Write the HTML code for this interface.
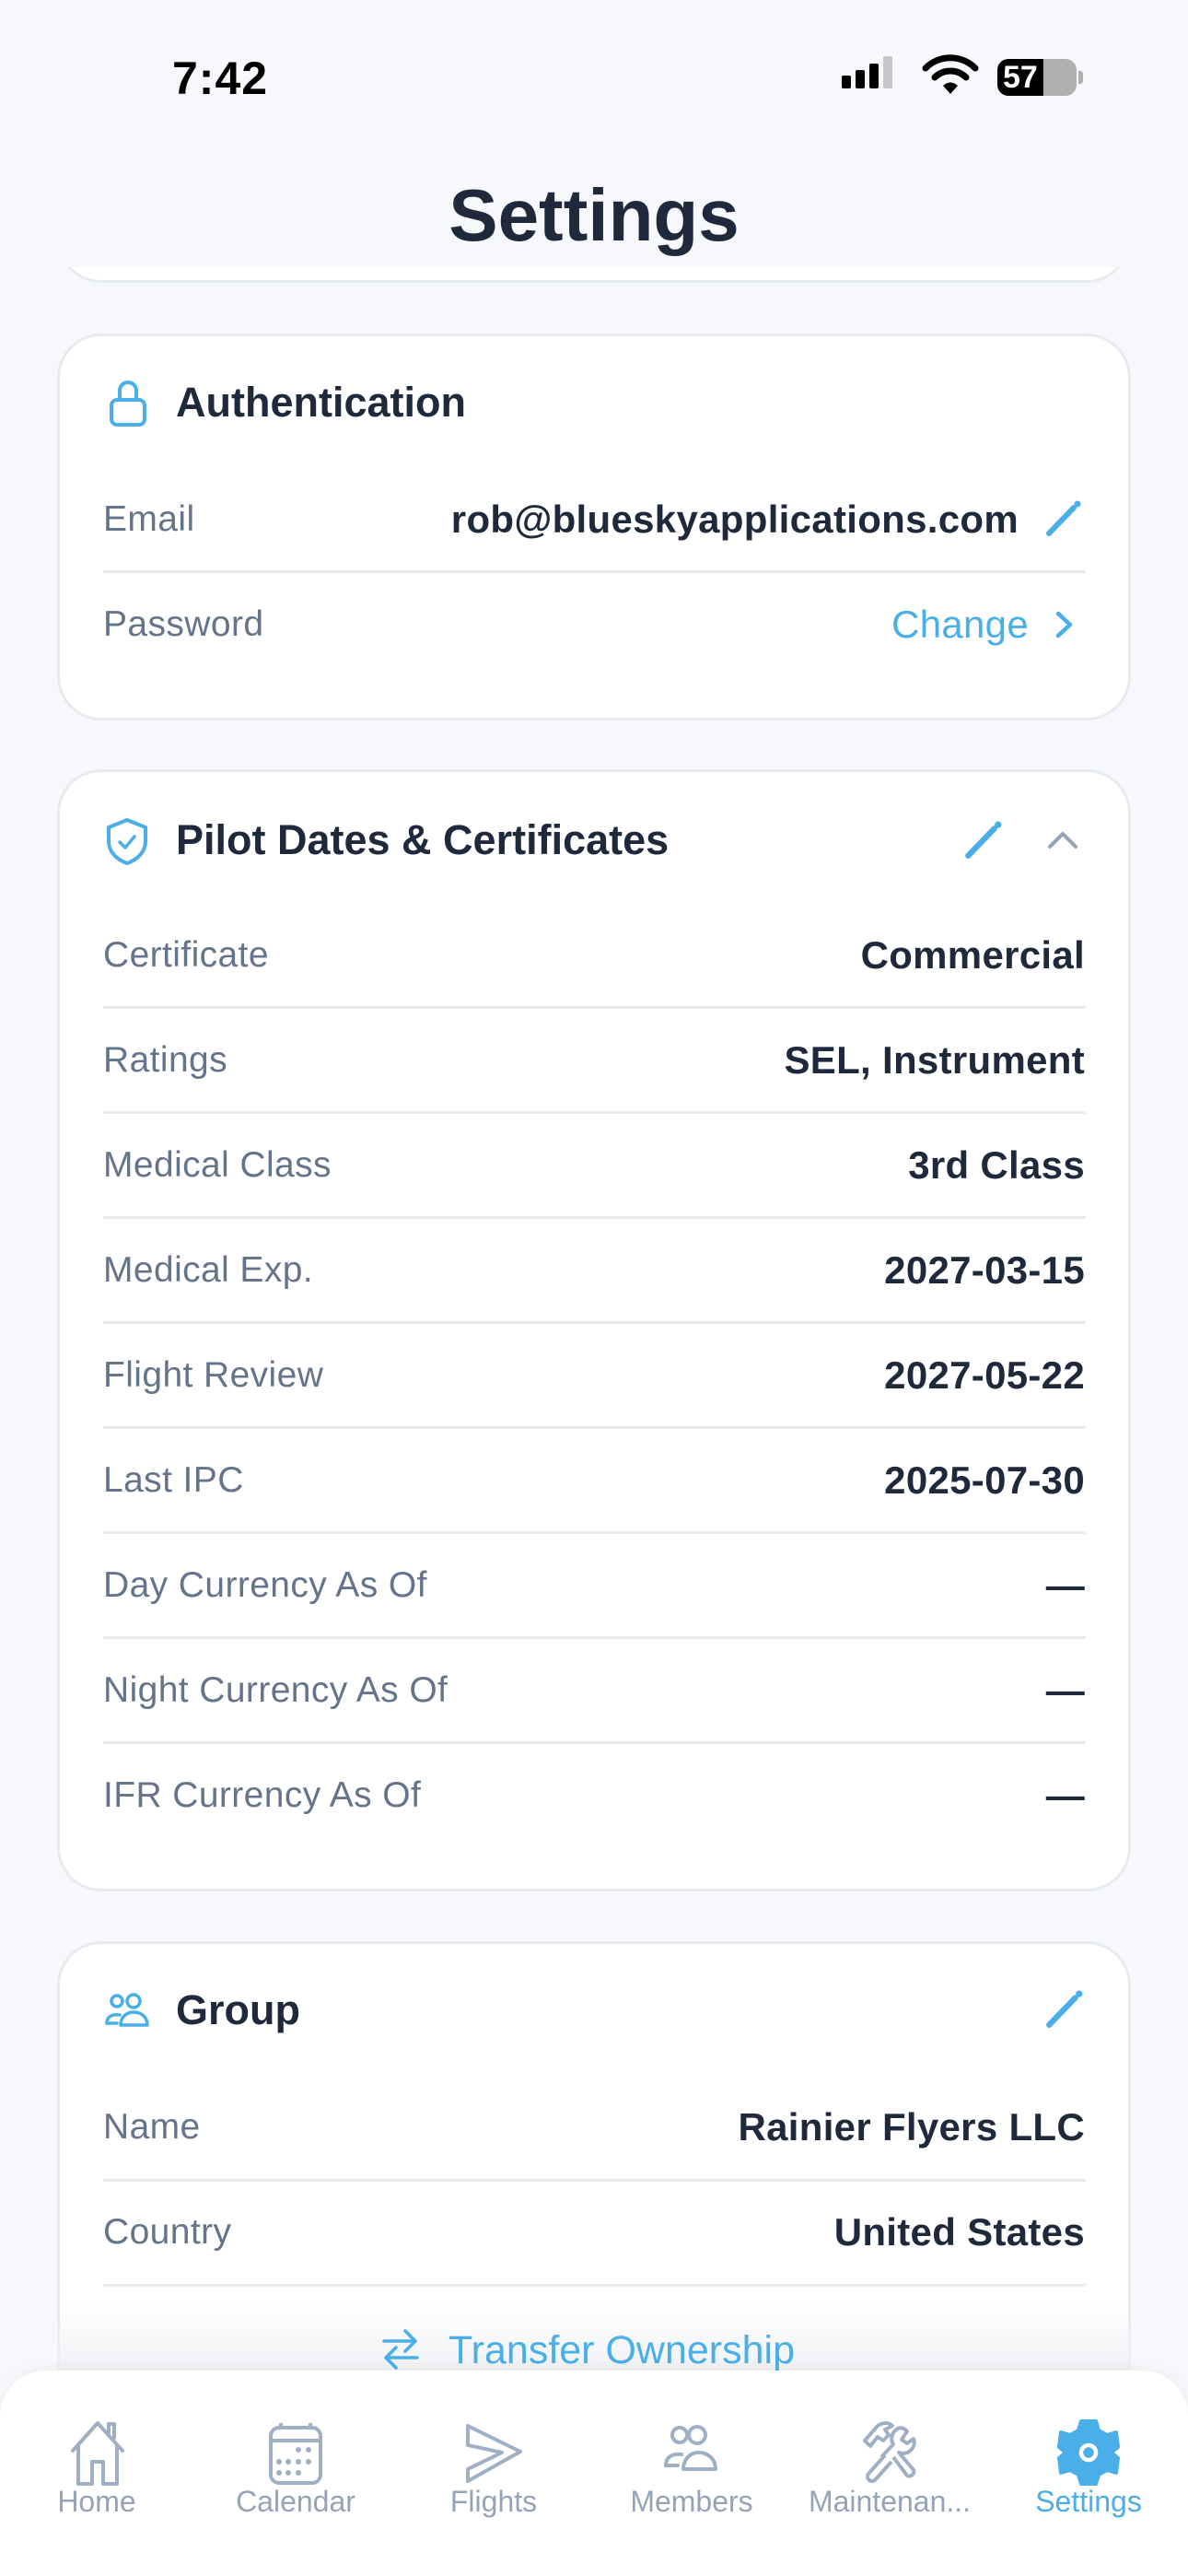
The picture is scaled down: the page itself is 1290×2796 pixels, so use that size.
<!DOCTYPE html>
<html><head><meta charset="utf-8"><style>
*{margin:0;padding:0;box-sizing:border-box}
body{width:1290px;height:2796px;background:#f6f8fb;font-family:"Liberation Sans",sans-serif;position:relative;overflow:hidden}
.a{position:absolute}
.card{position:absolute;left:62px;width:1166px;background:#fff;border:3px solid #e7ebf0;border-radius:48px}
.lbl{position:absolute;left:112px;font-size:39px;letter-spacing:0.4px;color:#64748b;line-height:46px;transform:translateY(-23px)}
.val{position:absolute;right:112px;font-size:42px;letter-spacing:0.3px;font-weight:bold;color:#1e293b;line-height:48px;transform:translateY(-24px)}
.div{position:absolute;left:112px;width:1067px;height:3px;background:#e8ecf1}
.hd{position:absolute;left:191px;font-size:45px;font-weight:bold;color:#1e293b;line-height:52px;transform:translateY(-26px)}
.tab{position:absolute;top:2697px;width:240px;margin-left:-120px;text-align:center;font-size:32px;color:#94a3b8}
svg{position:absolute;overflow:visible}
</style></head><body>

<div class="a" style="left:187px;top:56px;font-size:50px;font-weight:bold;color:#000;letter-spacing:1px">7:42</div>
<div class="a" style="left:914px;top:82px;width:10px;height:14px;background:#000;border-radius:2px"></div>
<div class="a" style="left:929px;top:76px;width:10px;height:20px;background:#000;border-radius:2px"></div>
<div class="a" style="left:944px;top:69px;width:10px;height:27px;background:#000;border-radius:2px"></div>
<div class="a" style="left:959px;top:61px;width:10px;height:35px;background:#c7c7cc;border-radius:2px"></div>
<svg style="left:1002px;top:60px" width="60" height="42" viewBox="0 0 60 42"><path d="M3 14 A38 38 0 0 1 57 14" stroke="#000" stroke-width="7" fill="none" stroke-linecap="round"/><path d="M13 24 A24 24 0 0 1 47 24" stroke="#000" stroke-width="7" fill="none" stroke-linecap="round"/><path d="M22 33 L30 42 L38 33 A11 11 0 0 0 22 33Z" fill="#000"/></svg>
<div class="a" style="left:1083px;top:64px;width:86px;height:40px;border-radius:12px;background:#b0b0b0;overflow:hidden"><div style="width:50px;height:40px;background:#000"></div><div class="a" style="left:6px;top:1px;font-size:34px;font-weight:bold;color:#fff">57</div></div>
<div class="a" style="left:1171px;top:77px;width:5px;height:14px;background:#b0b0b0;border-radius:0 3px 3px 0"></div>

<!-- partial card (clipped) -->
<div class="a" style="left:0;top:290px;width:1290px;height:22px;overflow:hidden">
  <div class="a" style="left:62px;top:-200px;width:1166px;height:217px;background:#fff;border:3px solid #e7ebf0;border-radius:48px"></div>
</div>

<div class="a" style="left:0;width:1290px;top:186px;text-align:center;font-size:80px;font-weight:bold;color:#1e293b;line-height:96px">Settings</div>

<!-- Auth card -->
<div class="card" style="top:362px;height:420px"></div>
<svg style="left:118px;top:412px" width="42" height="52" viewBox="0 0 42 52"><path d="M12 22 V12 a9 9 0 0 1 18 0 V22" stroke="#4aaee8" stroke-width="4" fill="none"/><rect x="3" y="22" width="36" height="27" rx="6" stroke="#4aaee8" stroke-width="4" fill="none"/></svg>
<div class="hd" style="top:437px">Authentication</div>
<div class="lbl" style="top:564px">Email</div>
<div class="val" style="top:564px;right:184px">rob@blueskyapplications.com</div>
<svg style="left:1134px;top:543px" width="40" height="40" viewBox="0 0 40 40"><path d="M5 36 L32 8" stroke="#4aaee8" stroke-width="6" stroke-linecap="round"/><circle cx="36" cy="4" r="3.5" fill="#4aaee8"/></svg>
<div class="div" style="top:619px"></div>
<div class="lbl" style="top:678px">Password</div>
<div class="val" style="top:678px;right:173px;color:#4aaee8;font-weight:normal;font-size:42px">Change</div>
<svg style="left:1146px;top:663px" width="20" height="30" viewBox="0 0 20 30"><path d="M3 3 L16 15 L3 27" stroke="#4aaee8" stroke-width="4.5" fill="none" stroke-linecap="round" stroke-linejoin="round"/></svg>

<!-- Pilot card -->
<div class="card" style="top:835px;height:1218px"></div>
<svg style="left:113px;top:887px" width="50" height="52" viewBox="0 0 50 52"><path d="M25 3 L45 11 V26 C45 38 36 46 25 50 C14 46 5 38 5 26 V11 Z" stroke="#4aaee8" stroke-width="4" fill="none" stroke-linejoin="round"/><path d="M17 27 L23 33 L33 21" stroke="#4aaee8" stroke-width="3.5" fill="none" stroke-linecap="round" stroke-linejoin="round"/></svg>
<div class="hd" style="top:912px">Pilot Dates &amp; Certificates</div>
<svg style="left:1046px;top:891px" width="42" height="42" viewBox="0 0 40 40"><path d="M5 36 L32 8" stroke="#4aaee8" stroke-width="6" stroke-linecap="round"/><circle cx="36" cy="4" r="3.5" fill="#4aaee8"/></svg>
<svg style="left:1137px;top:900px" width="34" height="24" viewBox="0 0 34 24"><path d="M3 19 L17 5 L31 19" stroke="#94a3b8" stroke-width="4" fill="none" stroke-linecap="round" stroke-linejoin="round"/></svg>

<div class="lbl" style="top:1037px">Certificate</div><div class="val" style="top:1037px">Commercial</div><div class="div" style="top:1092px"></div>
<div class="lbl" style="top:1151px">Ratings</div><div class="val" style="top:1151px">SEL, Instrument</div><div class="div" style="top:1206px"></div>
<div class="lbl" style="top:1265px">Medical Class</div><div class="val" style="top:1265px">3rd Class</div><div class="div" style="top:1320px"></div>
<div class="lbl" style="top:1379px">Medical Exp.</div><div class="val" style="top:1379px">2027-03-15</div><div class="div" style="top:1434px"></div>
<div class="lbl" style="top:1493px">Flight Review</div><div class="val" style="top:1493px">2027-05-22</div><div class="div" style="top:1548px"></div>
<div class="lbl" style="top:1607px">Last IPC</div><div class="val" style="top:1607px">2025-07-30</div><div class="div" style="top:1662px"></div>
<div class="lbl" style="top:1721px">Day Currency As Of</div><div class="val" style="top:1721px">—</div><div class="div" style="top:1776px"></div>
<div class="lbl" style="top:1835px">Night Currency As Of</div><div class="val" style="top:1835px">—</div><div class="div" style="top:1890px"></div>
<div class="lbl" style="top:1949px">IFR Currency As Of</div><div class="val" style="top:1949px">—</div>

<!-- Group card -->
<div class="card" style="top:2107px;height:600px"></div>
<svg style="left:113px;top:2162px" width="52" height="40" viewBox="0 0 52 40"><circle cx="14" cy="10" r="6" stroke="#4aaee8" stroke-width="3.5" fill="none"/><circle cx="32" cy="10" r="7" stroke="#4aaee8" stroke-width="3.5" fill="none"/><path d="M3 34 C3 26 10 24 17 25" stroke="#4aaee8" stroke-width="3.5" fill="none" stroke-linecap="round"/><path d="M3 34 H14" stroke="#4aaee8" stroke-width="3.5" stroke-linecap="round"/><path d="M18 36 C18 26 26 22 32 22 C40 22 47 27 47 36 Z" stroke="#4aaee8" stroke-width="3.5" fill="none" stroke-linejoin="round"/></svg>
<div class="hd" style="top:2182px">Group</div>
<svg style="left:1134px;top:2160px" width="42" height="42" viewBox="0 0 40 40"><path d="M5 36 L32 8" stroke="#4aaee8" stroke-width="6" stroke-linecap="round"/><circle cx="36" cy="4" r="3.5" fill="#4aaee8"/></svg>
<div class="lbl" style="top:2309px">Name</div><div class="val" style="top:2309px">Rainier Flyers LLC</div><div class="div" style="top:2365px"></div>
<div class="lbl" style="top:2423px">Country</div><div class="val" style="top:2423px">United States</div><div class="div" style="top:2479px"></div>
<div class="a" style="left:62px;top:2500px;width:1166px;height:74px;background:linear-gradient(rgba(255,255,255,0),rgba(238,240,244,0.9))"></div>
<svg style="left:414px;top:2527px" width="42" height="46" viewBox="0 0 42 46"><path d="M3 14 H37 M26 3 L37 14 L26 25" stroke="#4aaee8" stroke-width="3.5" fill="none" stroke-linecap="round" stroke-linejoin="round"/><path d="M39 32 H5 M16 21 L5 32 L16 43" stroke="#4aaee8" stroke-width="3.5" fill="none" stroke-linecap="round" stroke-linejoin="round"/></svg>
<div class="a" style="left:487px;top:2526px;font-size:43px;color:#4aaee8;line-height:50px">Transfer Ownership</div>

<!-- Tab bar -->
<div class="a" style="left:0;top:2573px;width:1290px;height:223px;background:#fff;border-radius:50px 50px 0 0;box-shadow:0 -4px 16px rgba(0,0,0,0.04)"></div>
<svg style="left:75px;top:2626px" width="64" height="74" viewBox="0 0 64 74"><path d="M4 34 L31 4 L58 34 M10 28 V70 H25 V46 H37 V70 H52 V28 M43 14 V5 H49 V20" stroke="#9fb0c4" stroke-width="4" fill="none" stroke-linejoin="round" stroke-linecap="round"/></svg>
<svg style="left:291px;top:2627px" width="60" height="72" viewBox="0 0 60 72"><rect x="3" y="8" width="54" height="60" rx="9" stroke="#9fb0c4" stroke-width="4" fill="none"/><path d="M3 22 H57 M14 3 V10 M46 3 V10" stroke="#9fb0c4" stroke-width="4"/><g fill="#9fb0c4"><circle cx="33" cy="32" r="3"/><circle cx="44" cy="32" r="3"/><circle cx="12" cy="45" r="3"/><circle cx="22" cy="45" r="3"/><circle cx="33" cy="45" r="3"/><circle cx="44" cy="45" r="3"/><circle cx="12" cy="57" r="3"/><circle cx="22" cy="57" r="3"/><circle cx="33" cy="57" r="3"/></g></svg>
<svg style="left:505px;top:2630px" width="64" height="68" viewBox="0 0 64 68"><path d="M3 3 L60 31 L3 63 V50 L40 32 L3 24 Z" stroke="#9fb0c4" stroke-width="4" fill="none" stroke-linejoin="round"/></svg>
<svg style="left:720px;top:2632px" width="62" height="58" viewBox="0 0 62 58"><circle cx="18" cy="11" r="8" stroke="#9fb0c4" stroke-width="4" fill="none"/><circle cx="37" cy="11" r="9" stroke="#9fb0c4" stroke-width="4" fill="none"/><path d="M3 44 C3 34 11 31 20 32" stroke="#9fb0c4" stroke-width="4" fill="none" stroke-linecap="round"/><path d="M3 44 H16" stroke="#9fb0c4" stroke-width="4" stroke-linecap="round"/><path d="M22 48 C22 36 31 30 38 30 C48 30 57 36 57 48 Z" stroke="#9fb0c4" stroke-width="4" fill="none" stroke-linejoin="round"/></svg>
<svg style="left:933px;top:2627px" width="66" height="70" viewBox="0 0 66 70"><path d="M28 38 L10 58 a5 5 0 0 0 7 7 L35 45 M45 8 a12 12 0 0 0 -8 18 L24 40 M37 40 L52 60 a5 5 0 0 0 7 -6 L43 35 a12 12 0 0 0 16 -15 L52 25 L46 21 L52 12 a12 12 0 0 0 -7 -4" stroke="#9fb0c4" stroke-width="4" fill="none" stroke-linejoin="round"/><path d="M6 22 L20 6 C26 2 32 2 36 6 L28 10 L32 16 L26 22 L20 18 L12 28 Z" stroke="#9fb0c4" stroke-width="4" fill="none" stroke-linejoin="round"/></svg>
<svg style="left:1150px;top:2626px" width="64" height="72" viewBox="0 0 64 72"><path d="M24 2 H40 L43 12 L52 17 L62 14 L64 30 L57 36 L64 42 L62 58 L52 55 L43 60 L40 70 H24 L21 60 L12 55 L2 58 L0 42 L7 36 L0 30 L2 14 L12 17 L21 12 Z" fill="#4aaee8" stroke="#4aaee8" stroke-width="4" stroke-linejoin="round"/><circle cx="32" cy="36" r="8" stroke="#fff" stroke-width="4.5" fill="none"/></svg>
<div class="tab" style="left:105px">Home</div>
<div class="tab" style="left:321px">Calendar</div>
<div class="tab" style="left:536px">Flights</div>
<div class="tab" style="left:751px">Members</div>
<div class="tab" style="left:966px">Maintenan...</div>
<div class="tab" style="left:1182px;color:#4aaee8">Settings</div>
</body></html>
